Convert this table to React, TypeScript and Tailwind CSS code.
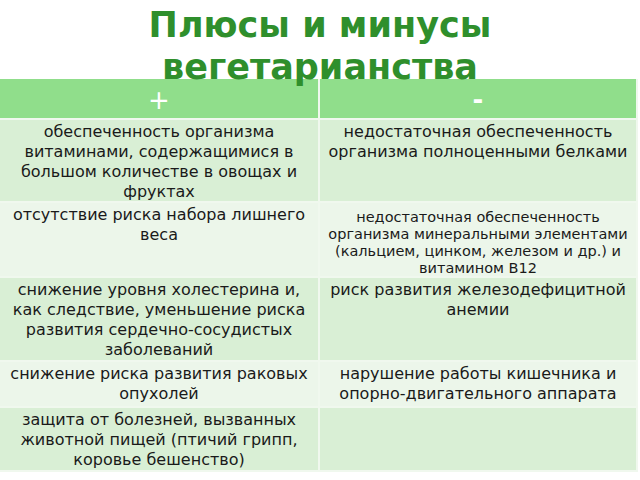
const rows: [string, string, string][] = [
  [
    'обеспеченность организма витаминами, содержащимися в большом количестве в овощах и фруктах',
    'недостаточная обеспеченность организма полноценными белками',
    'h-[83px]',
  ],
  [
    'отсутствие риска набора лишнего веса',
    'недостаточная обеспеченность организма минеральными элементами (кальцием, цинком, железом и др.) и витамином В12',
    'h-[75px]',
  ],
  [
    'снижение уровня холестерина и, как следствие, уменьшение риска развития сердечно-сосудистых заболеваний',
    'риск развития железодефицитной анемии',
    'h-[84px]',
  ],
  [
    'снижение риска развития раковых опухолей',
    'нарушение работы кишечника и опорно-двигательного аппарата',
    'h-[46px]',
  ],
  [
    'защита от болезней, вызванных животной пищей (птичий грипп, коровье бешенство)',
    '',
    'h-[64px]',
  ],
]

const App = () => {
  return (
    <div className="w-[640px] h-[480px] bg-white overflow-hidden" style={{ fontFamily: '"DejaVu Sans", Verdana, sans-serif' }}>
      <div className="h-[79px] relative z-10">
        <h1 className="text-center text-[35px] font-bold leading-[42px] pt-[4px] text-[#2f8f2c]">
          Плюсы и минусы
          <br />
          вегетарианства
        </h1>
      </div>
      <div className="w-[638px] grid grid-cols-[320px_318px]">
        <div className="h-[41px] bg-[#90de8b] border-r-2 border-b-2 border-[#f0f8ee] text-center text-white text-[26px] leading-[20px] pt-[11px]">+</div>
        <div className="h-[41px] bg-[#90de8b] border-r-2 border-b-2 border-[#f0f8ee] text-center text-white text-[26px] leading-[20px] pt-[11px] font-bold">-</div>
        {rows.map(([plus, minus, h], i) => {
          const bg = i % 2 === 0 ? 'bg-[#d9efd5]' : 'bg-[#ecf6ea]'
          return [
            <div key={`p${i}`} className={`${h} ${bg} border-r-2 border-b-2 border-[#f0f8ee] px-1 pt-[2px] text-center text-[16px] leading-[20px] text-[#1a1a1a]`}>
              {plus}
            </div>,
            <div
              key={`m${i}`}
              className={`${h} ${bg} border-r-2 border-b-2 border-[#f0f8ee] text-center text-[#1a1a1a] ${
                i === 1 ? 'px-2 text-[14.5px] leading-[17px] pt-[6px]' : 'px-1 text-[16px] leading-[20px] pt-[2px]'
              }`}
            >
              {minus}
            </div>,
          ]
        })}
      </div>
    </div>
  )
}

export default App
